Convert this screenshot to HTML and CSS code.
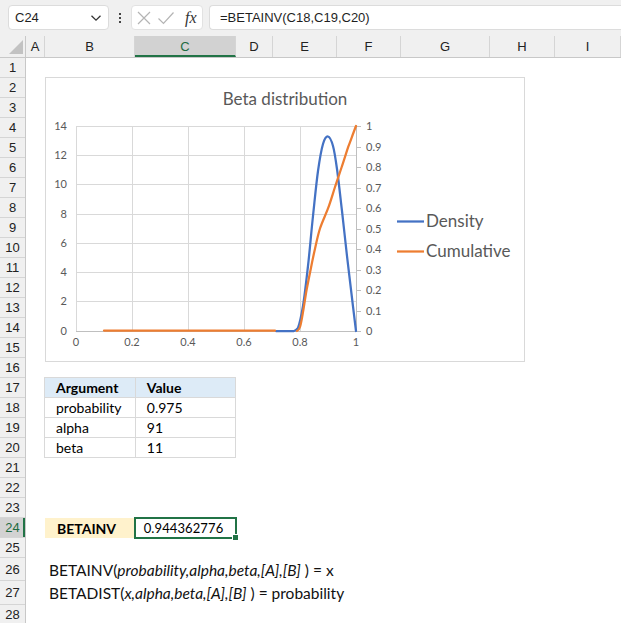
FILE: index.html
```html
<!DOCTYPE html>
<html>
<head>
<meta charset="utf-8">
<link rel="stylesheet" href="styles.css">
</head>
<body>
<div class="app">
  <div class="toolbar">
    <div class="namebox">
      <span>C24</span>
      <svg class="chev" width="12" height="8" viewBox="0 0 12 8"><path d="M1.5 1.8 L6 6.2 L10.5 1.8" fill="none" stroke="#333" stroke-width="1.3"/></svg>
    </div>
    <div class="dots"><i></i><i></i><i></i></div>
    <div class="fnbox">
      <svg width="16" height="16" viewBox="0 0 16 16"><path d="M2 2 L14 14 M14 2 L2 14" stroke="#b4b4b4" stroke-width="1.2" fill="none"/></svg>
      <svg width="18" height="16" viewBox="0 0 18 16"><path d="M1.5 8.5 L6.5 13.5 L16.5 2.5" stroke="#b4b4b4" stroke-width="1.2" fill="none"/></svg>
      <span class="fx">fx</span>
    </div>
    <div class="formula">=BETAINV(C18,C19,C20)</div>
  </div>

  <div class="colheads">
    <div class="corner"><svg width="16" height="16" viewBox="0 0 16 16"><path d="M15 1 L15 15 L1 15 Z" fill="#c2c2c2"/></svg></div>
    <div class="ch w-a">A</div>
    <div class="ch w-b">B</div>
    <div class="ch w-c sel">C</div>
    <div class="ch w-d">D</div>
    <div class="ch w-e">E</div>
    <div class="ch w-f">F</div>
    <div class="ch w-g">G</div>
    <div class="ch w-h">H</div>
    <div class="ch w-i">I</div>
  </div>

  <div class="sheet">
    <div class="rowheads">
      <div class="rh">1</div><div class="rh">2</div><div class="rh">3</div><div class="rh">4</div>
      <div class="rh">5</div><div class="rh">6</div><div class="rh">7</div><div class="rh">8</div>
      <div class="rh">9</div><div class="rh">10</div><div class="rh">11</div><div class="rh">12</div>
      <div class="rh">13</div><div class="rh">14</div><div class="rh">15</div><div class="rh">16</div>
      <div class="rh">17</div><div class="rh">18</div><div class="rh">19</div><div class="rh">20</div>
      <div class="rh">21</div><div class="rh">22</div><div class="rh">23</div><div class="rh sel">24</div>
      <div class="rh">25</div><div class="rh tall">26</div><div class="rh taller">27</div><div class="rh">28</div>
    </div>

    <div class="grid">
      <table class="args">
        <tr class="head"><td class="c1">Argument</td><td class="c2">Value</td></tr>
        <tr><td class="c1">probability</td><td class="c2">0.975</td></tr>
        <tr><td class="c1">alpha</td><td class="c2">91</td></tr>
        <tr><td class="c1">beta</td><td class="c2">11</td></tr>
      </table>

      <div class="result-label">BETAINV</div>
      <div class="result-value">0.944362776<span class="handle"></span></div>

      <div class="syntax r26">BETAINV(<i>probability,alpha,beta,[A],[B]</i> ) = x</div>
      <div class="syntax r27">BETADIST(<i>x,alpha,beta,[A],[B]</i> ) = probability</div>

      <div class="chart">
        <svg width="481" height="286" viewBox="0 0 481 286">
          <g transform="translate(-45 -76)">
            <rect x="45.5" y="76.5" width="479" height="284" fill="#fff" stroke="#d9d9d9"/>
            <text class="title" x="285" y="104" text-anchor="middle">Beta distribution</text>
            <g stroke="#d9d9d9" stroke-width="1" fill="none">
              <path d="M76 125.5 H356 M76 154.5 H356 M76 183.5 H356 M76 213.5 H356 M76 242.5 H356 M76 271.5 H356 M76 300.5 H356"/>
              <path d="M76.5 125 V330 M132.5 125 V330 M188.5 125 V330 M244.5 125 V330 M300.5 125 V330"/>
            </g>
            <g stroke="#bfbfbf" stroke-width="1" fill="none">
              <path d="M76 330.5 H357"/>
              <path d="M356.5 125 V331"/>
              <path d="M356 125.5 H361 M356 146.5 H361 M356 166.5 H361 M356 187.5 H361 M356 207.5 H361 M356 228.5 H361 M356 248.5 H361 M356 269.5 H361 M356 289.5 H361 M356 310.5 H361 M356 330.5 H361"/>
            </g>
            <g class="ax" text-anchor="end">
              <text x="67" y="129">14</text>
              <text x="67" y="158">12</text>
              <text x="67" y="187">10</text>
              <text x="67" y="217">8</text>
              <text x="67" y="246">6</text>
              <text x="67" y="275">4</text>
              <text x="67" y="304">2</text>
              <text x="67" y="334">0</text>
            </g>
            <g class="ax">
              <text x="366" y="129">1</text>
              <text x="366" y="150">0.9</text>
              <text x="366" y="170">0.8</text>
              <text x="366" y="191">0.7</text>
              <text x="366" y="211">0.6</text>
              <text x="366" y="232">0.5</text>
              <text x="366" y="252">0.4</text>
              <text x="366" y="273">0.3</text>
              <text x="366" y="293">0.2</text>
              <text x="366" y="314">0.1</text>
              <text x="366" y="334">0</text>
            </g>
            <g class="ax" text-anchor="middle">
              <text x="76" y="345">0</text>
              <text x="132" y="345">0.2</text>
              <text x="188" y="345">0.4</text>
              <text x="244" y="345">0.6</text>
              <text x="300" y="345">0.8</text>
              <text x="356" y="345">1</text>
            </g>
            <path fill="none" stroke="#4472c4" stroke-width="2.25" stroke-linejoin="round" stroke-linecap="round"
              d="M276 330 L294 330 C296.2 329.5 296.5 329 298 327 C299.5 322.8 301.3 315.3 303 305 C304.7 294.7 306.3 280 308 265 C309.7 250 311.3 230.8 313 215 C314.7 199.2 316.3 182 318 170 C319.7 158 321.3 148.8 323 143 C324.7 137.3 326.3 135.2 328 135.5 C329.7 135.8 331.5 139.6 333 145 C334.5 150.4 335.5 157.2 337 168 C338.5 178.8 340.3 195.5 342 210 C343.7 224.5 345.3 240.5 347 255 C348.7 269.5 350.5 284.5 352 297 C353.5 309.5 355.3 324.5 356 330"/>
            <path fill="none" stroke="#ed7d31" stroke-width="2.25" stroke-linecap="round" d="M104 329.5 L275 329.5"/>
            <path fill="none" stroke="#ed7d31" stroke-width="2.25" stroke-linejoin="round" stroke-linecap="round"
              d="M297 330 C298.5 329.5 299.3 328 300 326 C301.3 322 302.3 315 303.3 309.3 C304.5 302 305.5 295 306.7 288.3 C308 281.5 309.3 275 310.7 268.3 C312 261.5 313.45 254.5 315 247.7 C316.55 240.9 317.8 234.3 320 227.5 C322.2 220.7 325.8 213.6 328.3 206.7 C330.8 199.8 332.8 192.8 335 186 C337.2 179.2 339.5 172.7 341.7 166 C344 159.3 346 152.5 348.3 145.7 C351 138.5 353.5 131.5 356 125"/>
            <path d="M397 220.5 H424" stroke="#4472c4" stroke-width="2.25"/>
            <path d="M397 250.5 H424" stroke="#ed7d31" stroke-width="2.25"/>
            <text class="legend" x="426" y="226">Density</text>
            <text class="legend" x="426" y="256">Cumulative</text>
          </g>
        </svg>
      </div>
    </div>
  </div>
</div>
</body>
</html>
```

FILE: styles.css
```css
html, body {
  margin: 0;
  padding: 0;
  background: #ffffff;
}
body {
  width: 621px;
  height: 623px;
  overflow: hidden;
  font-family: "Liberation Sans", Arial, sans-serif;
}
.app {
  width: 621px;
}

/* toolbar */
.toolbar {
  height: 36px;
  background: #f0f0f0;
  display: flex;
  align-items: flex-start;
  padding: 5px 0 0 8px;
  box-sizing: border-box;
}
.namebox {
  width: 101px;
  height: 25px;
  box-sizing: border-box;
  background: #fff;
  border: 1px solid #dcdcdc;
  border-radius: 4px;
  display: flex;
  align-items: center;
  justify-content: space-between;
  padding: 0 6px 0 6px;
  font-size: 13px;
  color: #1f1f1f;
}
.chev { margin-top: 1px; }
.dots {
  width: 22px;
  height: 25px;
  display: flex;
  flex-direction: column;
  align-items: center;
  justify-content: center;
  gap: 2px;
}
.dots i {
  display: block;
  width: 2px;
  height: 2px;
  background: #444;
}
.fnbox {
  width: 72px;
  height: 25px;
  box-sizing: border-box;
  background: #fff;
  border: 1px solid #e2e2e2;
  border-radius: 4px;
  display: flex;
  align-items: center;
  gap: 5px;
  padding: 0 0 0 4px;
}
.fx {
  font-family: "Liberation Serif", "Times New Roman", serif;
  font-style: italic;
  font-size: 16px;
  color: #333;
  margin-left: 5px;
}
.formula {
  flex: 1;
  height: 25px;
  box-sizing: border-box;
  margin-left: 6px;
  background: #fff;
  border: 1px solid #dcdcdc;
  border-right: none;
  border-radius: 4px 0 0 4px;
  padding: 0 0 0 10px;
  display: flex;
  align-items: center;
  font-size: 13px;
  color: #1f1f1f;
}

/* column headers */
.colheads {
  display: flex;
  height: 21px;
  background: #f0f0f0;
  border-bottom: 1px solid #c8c8c8;
  box-sizing: content-box;
}
.corner {
  width: 26px;
  border-right: 1px solid #c8c8c8;
  display: flex;
  align-items: flex-end;
  justify-content: flex-end;
  padding: 0 1px 2px 0;
  box-sizing: border-box;
}
.ch {
  box-sizing: border-box;
  border-right: 1px solid #d5d5d5;
  display: flex;
  align-items: center;
  justify-content: center;
  font-size: 13px;
  color: #222;
}
.ch.sel {
  background: #d2d2d2;
  color: #1e6b41;
  border-bottom: 2px solid #217346;
  padding-top: 2px;
}
.w-a { width: 19px; }
.w-b { width: 90px; }
.w-c { width: 101px; }
.w-d { width: 37px; }
.w-e { width: 64px; }
.w-f { width: 64px; }
.w-g { width: 89px; }
.w-h { width: 65px; }
.w-i { width: 66px; }

/* sheet */
.sheet {
  display: flex;
}
.rowheads {
  width: 26px;
  flex: none;
  background: #f0f0f0;
  border-right: 1px solid #c8c8c8;
  box-sizing: border-box;
}
.rh {
  height: 20px;
  box-sizing: border-box;
  border-bottom: 1px solid #d5d5d5;
  display: flex;
  align-items: center;
  justify-content: center;
  font-size: 13px;
  color: #222;
}
.rh.tall { height: 23px; }
.rh.taller { height: 24px; }
.rh.sel {
  background: #d2d2d2;
  color: #1e6b41;
  box-shadow: inset -2px 0 0 #217346;
}
.grid {
  position: relative;
  flex: 1;
  display: grid;
  grid-template-columns: 19px 90px 101px 37px 64px 64px 89px 65px 66px;
  grid-template-rows: repeat(25, 20px) 23px 24px 20px;
  font-family: Lato, "Liberation Sans", sans-serif;
  font-size: 14px;
  color: #000;
}

/* argument table */
.args {
  grid-column: 2 / 4;
  grid-row: 17 / 21;
  border-collapse: collapse;
  width: 192px;
  margin-left: -1px;
  margin-top: -1px;
}
.args td {
  border: 1px solid #d9d9d9;
  height: 19px;
  padding: 0 0 0 11px;
  box-sizing: border-box;
  line-height: 18px;
}
.args .c1 { width: 91px; }
.args .c2 { width: 101px; }
.args .head td {
  background: #ddebf7;
  font-weight: bold;
}

/* result */
.result-label {
  grid-column: 2;
  grid-row: 24;
  background: #fff2cc;
  font-weight: bold;
  padding-left: 12px;
  display: flex;
  align-items: center;
}
.result-value {
  grid-column: 3;
  grid-row: 24;
  position: relative;
  display: flex;
  align-items: center;
  justify-content: center;
  box-shadow: 0 0 0 1px #217346, inset 0 0 0 1px #217346;
  padding-right: 4px;
  font-size: 13px;
  letter-spacing: 0.1px;
}
.handle {
  position: absolute;
  right: -3px;
  bottom: -3px;
  width: 5px;
  height: 5px;
  background: #217346;
  border: 1px solid #fff;
}

/* syntax lines */
.syntax {
  grid-column: 2 / -1;
  font-size: 15.5px;
  display: flex;
  align-items: center;
  padding-left: 4px;
  white-space: pre;
  color: #111;
}
.syntax i { font-style: italic; }
.r26 { grid-row: 26; }
.r27 { grid-row: 27; }

/* chart */
.chart {
  position: absolute;
  left: 19px;
  top: 19px;
  width: 481px;
  height: 286px;
}
.chart svg { display: block; }
.title {
  font-family: Lato, "Noto Sans", sans-serif;
  font-size: 17px;
  fill: #595959;
}
.ax {
  font-family: Lato, "Noto Sans", sans-serif;
  font-size: 11px;
  fill: #595959;
}
.legend {
  font-family: Lato, "Noto Sans", sans-serif;
  font-size: 17px;
  fill: #595959;
}
```
